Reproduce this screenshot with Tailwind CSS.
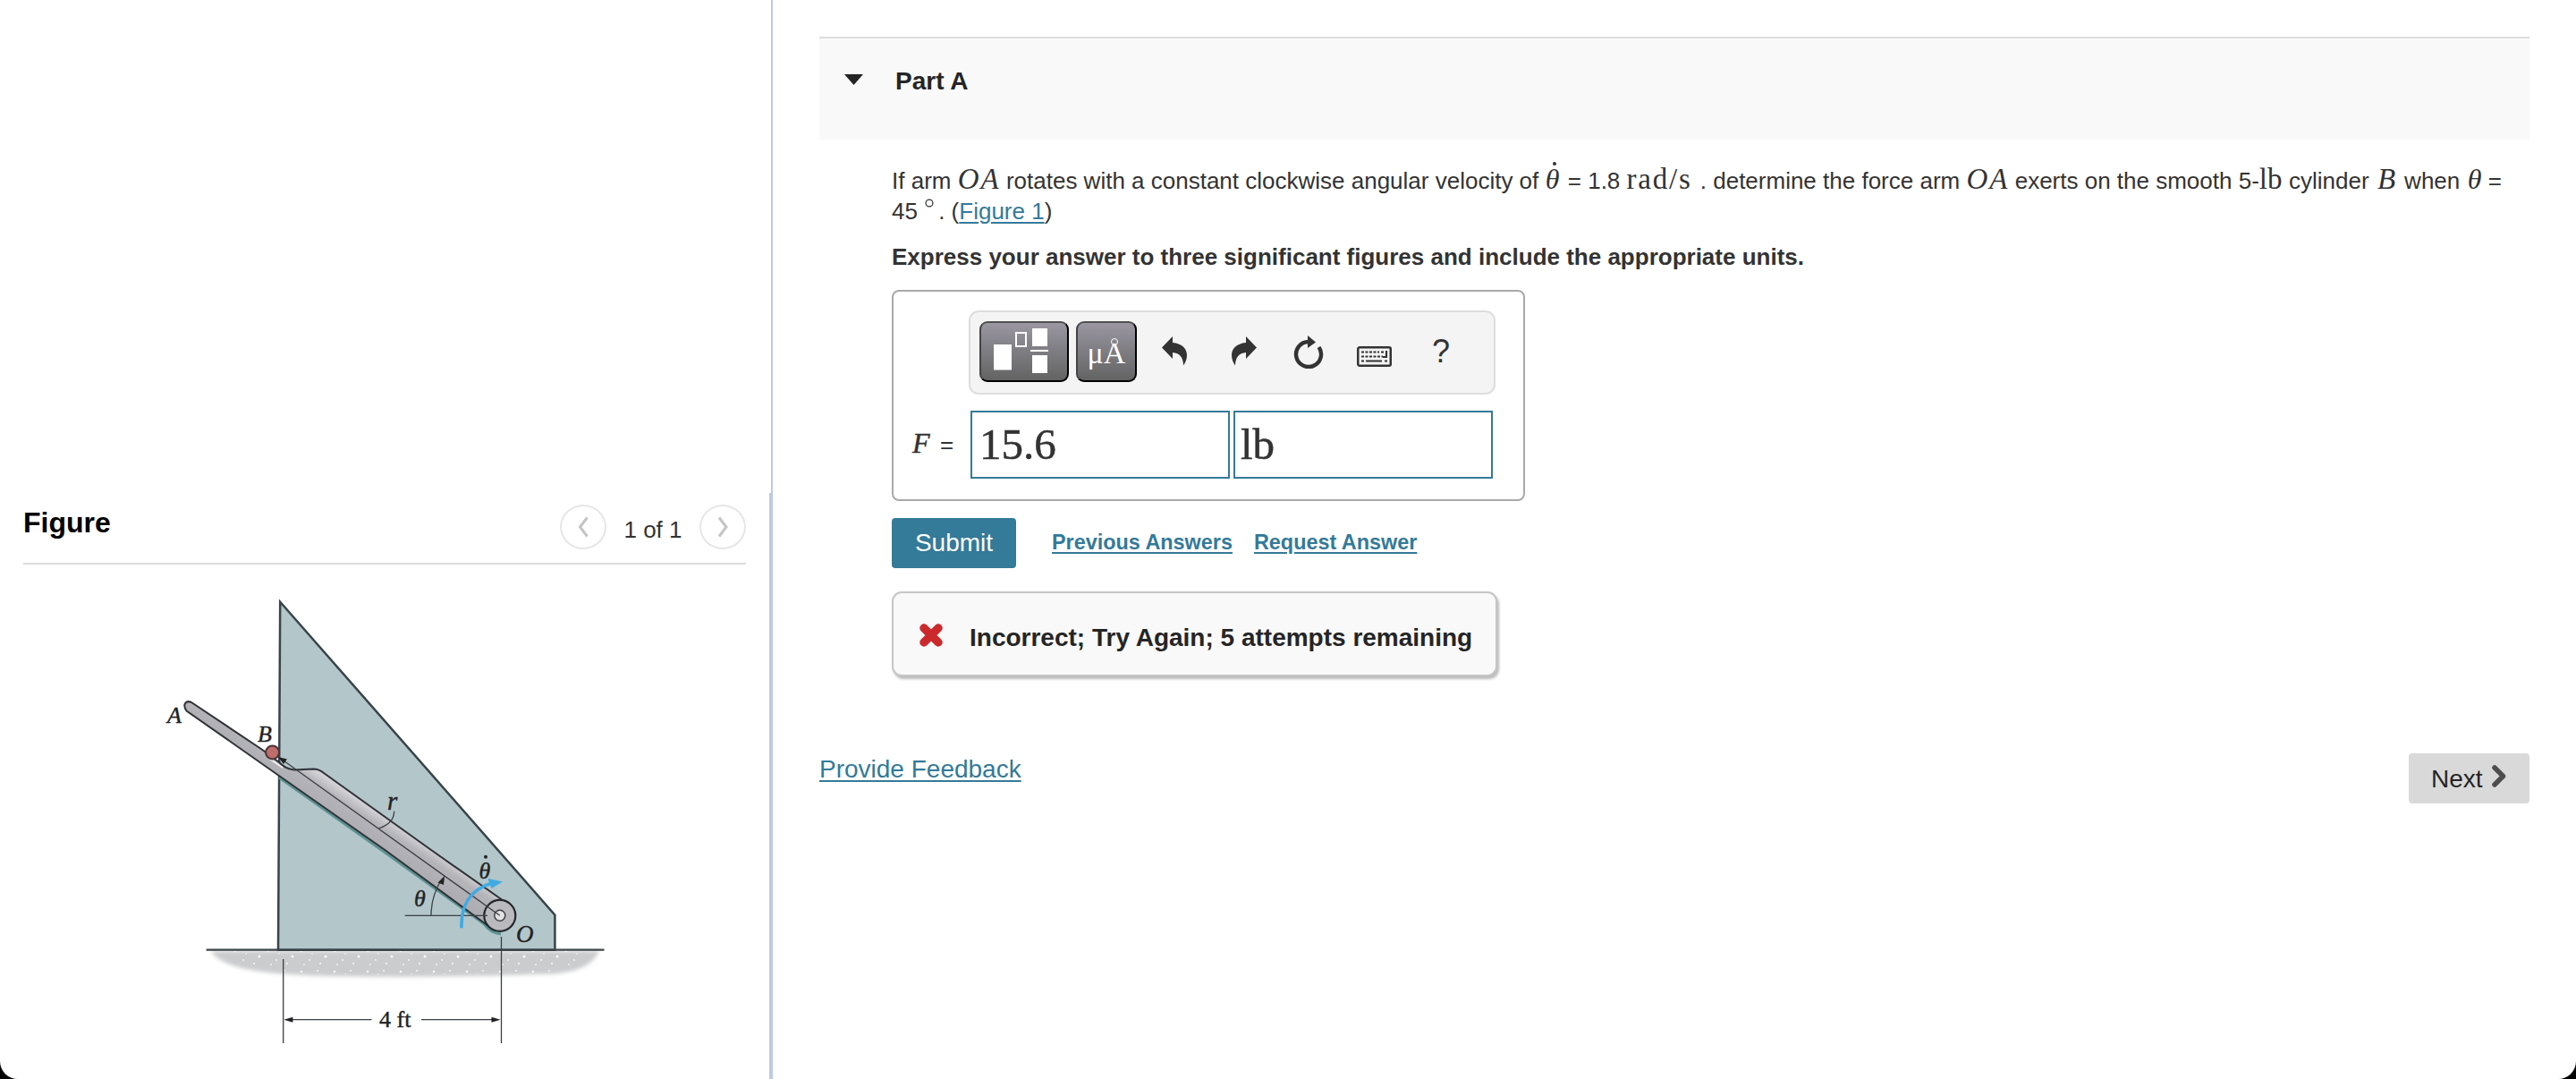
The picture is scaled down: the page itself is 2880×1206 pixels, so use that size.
<!DOCTYPE html>
<html lang="en">
<head>
<meta charset="utf-8">
<title>Part A</title>
<script src="https://cdn.jsdelivr.net/npm/@tailwindcss/browser@4"></script>
</head>
<body class="bg-black">
<div class="flex h-[1206px] w-[2880px] overflow-hidden rounded-b-[20px] bg-white font-['Liberation_Sans',Arial,sans-serif] text-[26px] leading-[35px] text-[#333]">
  <!-- Figure pane -->
  <aside class="flex w-[864px] shrink-0 flex-col">
    <div class="h-[551px] shrink-0 border-r-2 border-[#bccbdf]"></div>
    <div class="flex-1 border-r-4 border-[#bccbdf] pl-[26px] pr-[26px]">
      <header class="flex h-20 items-start justify-between border-b-2 border-[#ddd]">
        <h2 class="pt-[15px] text-[32px] font-bold leading-[36px] text-black">Figure</h2>
        <div class="flex items-start pt-[13px]">
          <button class="flex h-[50px] w-[52px] items-center justify-center rounded-[50%] border-2 border-[#e6e6e6]">
            <svg width="16" height="24" viewBox="0 0 16 24" fill="none" stroke="#c4c4c4" stroke-width="3"><path d="M12.500 1.500 4.500 12 12.500 22.500"/></svg>
          </button>
          <span class="w-[104px] pt-[11px] text-center">1 of 1</span>
          <button class="flex h-[50px] w-[52px] items-center justify-center rounded-[50%] border-2 border-[#e6e6e6]">
            <svg width="16" height="24" viewBox="0 0 16 24" fill="none" stroke="#c4c4c4" stroke-width="3"><path d="M4 1.500 12 12 4 22.500"/></svg>
          </button>
        </div>
      </header>
      <svg class="ml-[134px] mt-[9px] block" width="540" height="556" viewBox="160 640 540 556" font-family="'Liberation Serif',serif" font-size="26" fill="#222">
        <defs>
          <filter id="soft" x="-10%" y="-30%" width="120%" height="160%"><feGaussianBlur stdDeviation="2"/></filter>
          <pattern id="grit" width="37" height="23" patternUnits="userSpaceOnUse">
            <g fill="#fff" opacity=".85"><circle cx="4" cy="5" r="1.300"/><circle cx="13" cy="15" r="1"/><circle cx="22" cy="4" r="1"/><circle cx="31" cy="11" r="1.500"/><circle cx="25" cy="19" r="1.100"/><circle cx="7" cy="20" r=".9"/><circle cx="16" cy="8" r=".8"/></g>
          </pattern>
          <linearGradient id="steel" gradientUnits="userSpaceOnUse" x1="455" y1="930" x2="437" y2="957"><stop offset="0" stop-color="#d2d2d6"/><stop offset=".35" stop-color="#b5b4b9"/><stop offset="1" stop-color="#adacb2"/></linearGradient>
        </defs>
        <path d="M236 1063H670C660 1084 634 1089 600 1089Q480 1093 370 1091C300 1089 248 1084 236 1063Z" fill="#cbcccd" filter="url(#soft)"/>
        <path d="M250 1063H655Q640 1086 600 1087Q480 1091 370 1089Q270 1086 250 1063Z" fill="url(#grit)"/>
        <path d="M313.200 672.700 620.400 1022.700V1061.700H311L313.200 672.700Z" fill="#b3c6ca" stroke="#38444a" stroke-width="2.500"/>
        <path d="M230.600 1061.700H675.500" stroke="#3b4449" stroke-width="2.200"/>
        <path d="M312 869 430 952.500 541 1032.500Q548 1043 560 1044" fill="none" stroke="#5d9293" stroke-width="3"/>
        <path d="M214 785 292.600 837.500 312 852Q319 859.500 329 860.500L350 859.500Q357 859.500 362 864L482 950 561 1005.500 546 1035 430.300 950 311.500 866.700 208.500 794.500C204 788 207 782 214 785Z" fill="url(#steel)" stroke="#2e3236" stroke-width="2"/>
        <path d="M300 847 316 858" stroke="#eee" stroke-width="2"/>
        <circle cx="304.600" cy="841" r="7.500" fill="#bd6e6b" stroke="#4a3434" stroke-width="2"/>
        <circle cx="558.800" cy="1023.300" r="17.500" fill="#bab9be" stroke="#24282c" stroke-width="2.200"/>
        <circle cx="558.800" cy="1023.300" r="6" fill="#e2e2e4" stroke="#444" stroke-width="1.500"/>
        <g fill="none" stroke="#3b3f43" stroke-width="1.300">
          <path d="M314 848 558.800 1023.300M440.600 906.700Q441 920 423.400 926M452.700 1023.300H545M482 1023.300Q482 1002 493 984"/>
          <path d="M316.700 1072V1166M560.500 1047V1166M325 1139.700H415.500M471 1139.700H552"/>
        </g>
        <path d="M311 846 321 848.500 317 854ZM497 979 496 989 489.500 986.500ZM317.400 1139.700 327.400 1136.700V1142.700ZM559.500 1139.700 549.500 1136.700V1142.700Z"/>
        <path d="M516 1037.300C515 1012 526 994 550 987" fill="none" stroke="#3fabe3" stroke-width="3.600"/>
        <path d="M562 985.500 545.500 982 549.500 993Z" fill="#3fabe3"/>
        <g font-style="italic" stroke="#222" stroke-width=".4">
          <text x="187" y="807.700">A</text>
          <text x="288" y="828.700">B</text>
          <text x="433" y="904.700" font-size="29">r</text>
          <text x="463" y="1012.700">θ</text>
          <text x="535.500" y="982">θ</text>
          <text x="577" y="1053" font-size="27">O</text>
        </g>
        <circle cx="543" cy="957.700" r="2"/>
        <text x="424" y="1148.300" stroke="#222" stroke-width=".4">4 ft</text>
      </svg>
    </div>
  </aside>

  <!-- Problem pane -->
  <main class="flex-1 pl-[52px] pr-[52px] pt-[41px]">
    <header class="flex h-[115px] items-start border-t-2 border-[#ddd] bg-[#f9f9f9] pl-7 text-[28px] font-bold text-[#252525]">
      <svg class="mt-10" width="21" height="12" viewBox="0 0 21 12"><path d="M0 0H21L10.500 12Z" fill="#252525"/></svg>
      <h1 class="ml-9 mt-[30px] leading-[35px]">Part A</h1>
    </header>
    <section class="pl-[81px] pt-7">
      <p class="h-[70px] whitespace-nowrap">If arm <span class="inline-block w-[47px] font-['Liberation_Serif'] text-[33px] italic leading-none tracking-[2px]">OA</span> rotates with a constant clockwise angular velocity of <span class="relative inline-block w-[16px] text-center font-['Liberation_Serif'] text-[32px] italic leading-none">θ<i class="absolute left-[8px] top-[-3px] size-[4px] rounded-full bg-[#333]"></i></span> <span class="ml-[2px]">=</span> 1.8 <span class="inline-block w-[75px] font-['Liberation_Serif'] text-[33px] leading-none tracking-[1.8px]">rad/s</span> . determine the force arm <span class="inline-block w-[47px] font-['Liberation_Serif'] text-[33px] italic leading-none tracking-[2px]">OA</span> exerts on the smooth 5-<span class="inline-block w-[26px] font-['Liberation_Serif'] text-[33px] leading-none">lb</span> cylinder <span class="ml-[2px] inline-block w-[23px] font-['Liberation_Serif'] text-[33px] italic leading-none">B</span> when <span class="ml-px inline-block w-[16px] text-center font-['Liberation_Serif'] text-[32px] italic leading-none">θ</span> =<br><span class="relative -top-px">45 <svg class="relative -top-[11px] ml-px mr-[5px] inline-block" width="10" height="10" viewBox="0 0 11 11"><circle cx="5.500" cy="5.500" r="4.300" fill="none" stroke="#333" stroke-width="1.400"/></svg>. (<a class="text-[#347a99] underline decoration-2 underline-offset-[3px]">Figure 1</a>)</span></p>
      <p class="mt-4 font-bold">Express your answer to three significant figures and include the appropriate units.</p>

      <div class="mt-[19px] h-[236px] w-[708px] rounded-lg border-2 border-[#a9a9a9] pl-[84px] pt-[21px]">
        <div class="flex h-[94px] w-[589px] items-start rounded-[11px] border-2 border-[#ddd] bg-[#f4f4f4] pl-[10px] pt-[10px]">
          <button class="h-[68px] w-[100px] rounded-[9px] border-2 border-b-black border-l-[#444] border-r-black border-t-[#505050] bg-linear-to-b from-[#9a97a2] to-[#636363]">
            <svg width="96" height="64" viewBox="1097 361 96 64" fill="#fff"><path d="M1111 385h20v28.500h-20zM1154 367h17v20h-17zM1152 391h20v2h-20zM1154 397h17v20h-17z"/><path d="M1136 372h11v15h-11z" fill="none" stroke="#fff" stroke-width="2"/></svg>
          </button>
          <button class="ml-2 h-[68px] w-[68px] rounded-[9px] border-2 border-b-black border-l-[#444] border-r-black border-t-[#505050] bg-linear-to-b from-[#9a97a2] to-[#636363] pb-px pt-[5px] font-['Liberation_Serif'] text-[34px] leading-[58px] text-white">μ<span class="relative">A<i class="absolute left-[8px] top-[2px] size-[8px] rounded-full border-[1.5px] border-white"></i></span></button>
          <svg class="ml-7 mt-[17px]" width="28" height="33" viewBox="0 0 28 33" fill="#333"><path d="M0 12.500 12 0V7C23 8 28 14 28 21Q28 27 24 32.500C24 24 20 18.500 12 18V25Z"/></svg>
          <svg class="ml-[50px] mt-[17px]" width="28" height="33" viewBox="0 0 28 33" fill="#333"><path d="M28 12.500 16 0V7C5 8 0 14 0 21Q0 27 4 32.500C4 24 8 18.500 16 18V25Z"/></svg>
          <svg class="ml-[41px] mt-4" width="34" height="37" viewBox="0 0 34 37"><path d="M17 7A14 14 0 1 0 28.500 13" fill="none" stroke="#333" stroke-width="4.400"/><path d="M16 0 25 7.500 16 14Z" fill="#333"/></svg>
          <svg class="ml-[37px] mt-7" width="39" height="23" viewBox="0 0 39 23"><rect x="1.250" y="1.250" width="36.500" height="20.500" rx="1.800" fill="none" stroke="#333" stroke-width="2.500"/><path d="M5 6.500h20M27 6.500h3M5 11.500h24M5 16.500h3M31 16.500h3" stroke="#333" stroke-width="2.200" stroke-dasharray="3 1.500"/><path d="M10 16.500h18M33 5v7h-4" fill="none" stroke="#333" stroke-width="2.200"/></svg>
          <span class="ml-[45px] text-[36px] leading-[68px]">?</span>
        </div>
        <div class="-ml-[63px] mt-[18px] flex h-[76px] items-center">
          <label class="flex w-[65px] items-baseline leading-[36px]"><span class="w-[30px] font-['Liberation_Serif'] text-[32px] italic leading-none [-webkit-text-stroke:.5px_#333]">F</span><span class="pl-px">=</span></label>
          <div class="h-[76px] w-[290px] border-2 border-[#347a99] pl-[8px] font-['Liberation_Serif'] text-[49px] leading-[71px] [-webkit-text-stroke:.5px_#333]">15.6</div>
          <div class="ml-1 h-[76px] w-[290px] border-2 border-[#347a99] pl-[6px] font-['Liberation_Serif'] text-[49px] leading-[71px] [-webkit-text-stroke:.5px_#333]">lb</div>
        </div>
      </div>

      <div class="mt-[19px] flex h-14 items-center text-[23.4px] font-bold text-[#347a99]">
        <button class="h-14 w-[139px] rounded-[4px] bg-[#347a99] text-[28px] font-normal leading-[56px] text-white">Submit</button>
        <a class="ml-10 -mt-[2px] underline decoration-2 underline-offset-[3px]">Previous Answers</a>
        <a class="ml-[24px] -mt-[2px] underline decoration-2 underline-offset-[3px]">Request Answer</a>
      </div>

      <div class="mt-[26px] flex h-[95px] w-[677px] items-center rounded-[11px] border-2 border-[#c6c6c6] bg-[#f9f9f9] pl-7 text-[28px] font-bold text-[#252525] shadow-[2px_3px_3px_#bbb]">
        <svg width="28" height="28" viewBox="0 0 28 28" class="mt-[3px]"><path d="M6 6 22 22M22 6 6 22" stroke="#cb2a2d" stroke-width="9.500" stroke-linecap="round"/></svg>
        <span class="ml-[29px] mt-[7px] whitespace-nowrap">Incorrect; Try Again; 5 attempts remaining</span>
      </div>
    </section>
    <footer class="mt-[86px] flex items-start justify-between text-[28px]">
      <a class="text-[#347a99] underline decoration-2 underline-offset-[3px]">Provide Feedback</a>
      <button class="flex h-14 w-[135px] items-center rounded-[4px] bg-[#d9d9d9] pl-[25px] text-[#252525]">Next
        <svg class="ml-[10px] -mt-[5px]" width="16" height="25" viewBox="0 0 16 25"><path d="M3 3 12.500 12.500 3 22" fill="none" stroke="#4d4d4d" stroke-width="5.500" stroke-linecap="round" stroke-linejoin="round"/></svg>
      </button>
    </footer>
  </main>
</div>
</body>
</html>
